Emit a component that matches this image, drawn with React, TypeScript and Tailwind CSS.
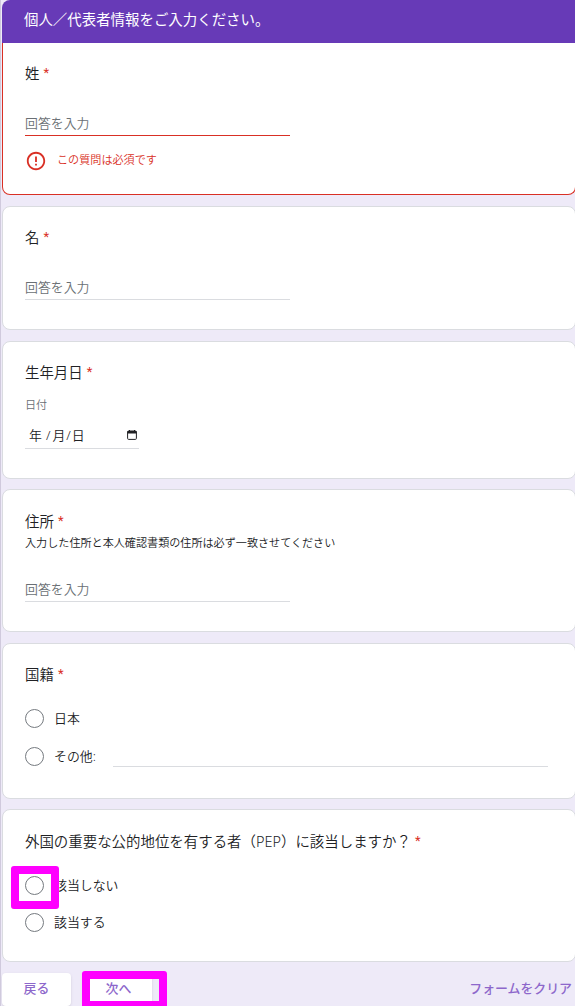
import type { ReactNode } from 'react';
import { MdErrorOutline } from 'react-icons/md';

interface QuestionTitleProps {
  title: string;
}

function QuestionTitle({ title }: QuestionTitleProps) {
  return (
    <h2 className="flex h-5 items-center text-[14.45px] leading-5 text-[#202124]">
      {title}
      <span className="ml-1 pb-0.5 font-['Roboto'] text-[13px] font-normal leading-5 text-[#d93025]">*</span>
    </h2>
  );
}

interface QuestionCardProps {
  title: string;
  className: string;
  children: ReactNode;
}

/**
 * White card with a required question title
 */
function QuestionCard({ title, className, children }: QuestionCardProps) {
  return (
    <section
      className={`shrink-0 rounded-lg border border-[#dadce0] bg-white pl-[22px] ${className}`}
    >
      <QuestionTitle title={title} />
      {children}
    </section>
  );
}

function AnswerField({ className }: { className: string }) {
  return (
    <div
      className={`flex h-6 w-[265px] items-center border-b pb-px text-[12.9px] leading-5 text-[#6a6f74] ${className}`}
    >
      回答を入力
    </div>
  );
}

interface RadioOptionProps {
  label: string;
  className?: string;
  highlighted?: boolean;
}

function RadioOption({ label, className = '', highlighted = false }: RadioOptionProps) {
  return (
    <div className={`relative flex h-5 items-center text-[12.9px] leading-5 text-[#202124] ${className}`}>
      <span className="size-[19px] shrink-0 rounded-full border-[1.8px] border-[#757a7f]" />
      <span className="ml-2.5 pb-px">{label}</span>
      {highlighted && (
        <span className="absolute -left-3.5 -top-[9px] h-[43px] w-12 rounded-[3px] border-8 border-[#ff00ff]" />
      )}
    </div>
  );
}

export default function App() {
  return (
    <div className="flex h-[1006px] w-[575px] flex-col overflow-hidden border-l border-[#d0cadd] bg-[#eeeaf8] pl-px font-['Noto_Sans','Noto_Sans_CJK_JP',sans-serif] font-[350]">
      {/* The cards run one pixel past the right edge */}
      <div className="flex w-[574px] shrink-0 flex-col">
        {/* Section header, joined to the first question */}
        <header className="flex h-[43px] shrink-0 items-center rounded-tl-lg bg-[#673ab7] pb-[3px] pl-[22px] text-[14.45px] font-normal leading-5 text-white">
          個人／代表者情報をご入力ください。
        </header>
        <section className="h-[152px] shrink-0 rounded-b-lg border border-t-0 border-[#d93025] bg-white pl-[22px] pt-[21px]">
          <QuestionTitle title="姓" />
          <AnswerField className="mt-7 border-[#d93025]" />
          <div className="mt-[15px] flex h-5 items-center text-[11.1px] text-[#d93025]">
            <MdErrorOutline className="size-[22px]" />
            <span className="ml-2.5 pb-px">この質問は必須です</span>
          </div>
        </section>

        <QuestionCard title="名" className="mt-[11px] h-[124px] pt-[21px]">
          <AnswerField className="mt-7 border-[#dadce0]" />
        </QuestionCard>

        <QuestionCard title="生年月日" className="mt-[11px] h-[138px] pt-[21px]">
          <div className="mt-3 h-5 text-[11.1px] leading-5 text-[#6a6f74]">日付</div>
          <div className="mt-[9px] flex h-[25px] w-[114px] items-center justify-between border-b border-[#dadce0] pb-[3px] pl-1 pr-0.5 text-[12.9px] leading-5 text-[#202124]">
            <span className="flex">
              <span>年</span>
              <span className="ml-1">/</span>
              <span className="ml-0.5">月</span>
              <span className="ml-px">/</span>
              <span className="ml-px">日</span>
            </span>
            <svg width="10" height="10" viewBox="0 0 10 10" fill="none">
              <rect x="0.6" y="1" width="8.8" height="8.4" rx="1" stroke="#202124" strokeWidth="1" />
              <path d="M0.5 1h9v2.5h-9zM2 0h1v1H2zM7 0h1v1H7z" fill="#202124" />
            </svg>
          </div>
        </QuestionCard>

        <QuestionCard title="住所" className="mt-2.5 h-[143px] pt-[22px]">
          <p className="mt-px h-5 text-[11.1px] leading-5 text-[#202124]">
            入力した住所と本人確認書類の住所は必ず一致させてください
          </p>
          <AnswerField className="mt-[25px] border-[#dadce0]" />
        </QuestionCard>

        <QuestionCard title="国籍" className="mt-[11px] h-[156px] pt-[21px]">
          <RadioOption label="日本" className="mt-[23px]" />
          <div className="mt-[18px] flex">
            <RadioOption label="その他:" />
            <span className="ml-[17px] h-[21px] w-[435px] border-b border-[#dadce0]" />
          </div>
        </QuestionCard>

        <QuestionCard
          title="外国の重要な公的地位を有する者（PEP）に該当しますか？"
          className="mt-2.5 h-[153px] pt-[22px]"
        >
          <RadioOption label="該当しない" className="mt-[23px]" highlighted />
          <RadioOption label="該当する" className="mt-[17px]" />
        </QuestionCard>
      </div>

      {/* Form navigation */}
      <footer className="mt-[11px] flex h-[33px] shrink-0 items-center text-[12.9px] font-medium leading-5 text-[#8d67cb]">
        <span className="flex h-[33px] w-[69px] items-center justify-center rounded bg-white pb-[3px] shadow-sm">
          戻る
        </span>
        <span className="relative ml-3 flex h-[33px] w-[69px] items-center justify-center rounded bg-white pb-[3px] pl-0.5 shadow-sm">
          次へ
          <span className="absolute -left-px -top-0.5 h-[38px] w-[85px] rounded-[3px] border-8 border-[#ff00ff]" />
        </span>
        <span className="ml-auto mr-[3px] pb-[3px]">フォームをクリア</span>
      </footer>
    </div>
  );
}
